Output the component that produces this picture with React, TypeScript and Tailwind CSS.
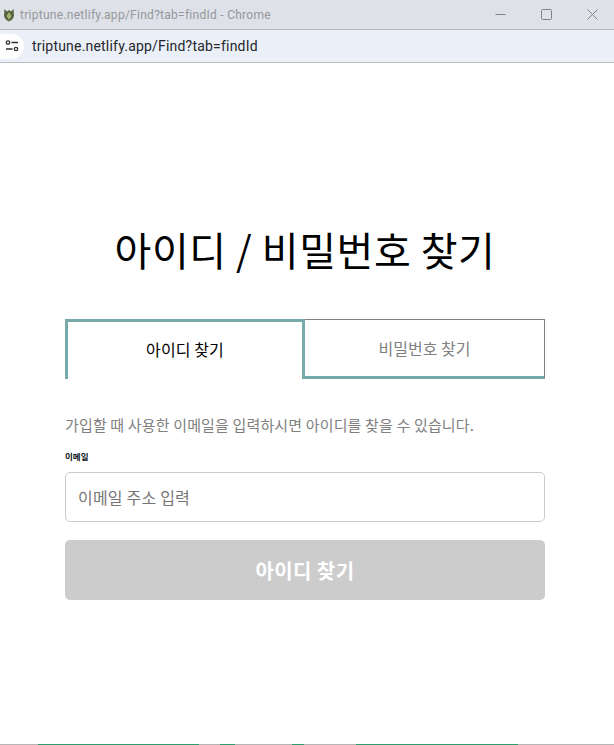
const KR = "font-['Noto_Sans_CJK_KR','Noto_Sans',sans-serif]";

function Leaf() {
  return (
    <svg width="14" height="14" viewBox="0 0 14 14" className="shrink-0">
      <path d="M2.5 1 L5 3.5 L7 2 L9 3.5 L11.5 1 L12 8 C11.5 11 8.5 13 7 13.5 C5.5 13 2.5 11 2 8 Z" fill="#55643f" />
      <path d="M7 4 L9.5 8 L7 12 L4.5 8 Z" fill="#9db56f" />
    </svg>
  );
}

function TitleBar() {
  return (
    <div className="flex h-[30px] shrink-0 items-center justify-between border-b border-[#b4b8bd] bg-[#dee1e7]">
      <div className="flex items-center gap-[4px] pl-[2px]">
        <Leaf />
        <span className="font-['Roboto',sans-serif] text-[12px] tracking-[0.27px] text-[#94979c]">
          triptune.netlify.app/Find?tab=findId - Chrome
        </span>
      </div>
      <div className="flex items-center gap-[35px] pr-[16px]">
        <svg width="11" height="11" viewBox="0 0 11 11" fill="none" stroke="#808387">
          <path d="M0.5 5.5H10.5" />
        </svg>
        <svg width="11" height="11" viewBox="0 0 11 11" fill="none" stroke="#808387">
          <rect x="0.5" y="0.5" width="10" height="10" rx="1" />
        </svg>
        <svg width="11" height="11" viewBox="0 0 11 11" fill="none" stroke="#808387">
          <path d="M0.5 0.5L10.5 10.5M10.5 0.5L0.5 10.5" />
        </svg>
      </div>
    </div>
  );
}

function AddressBar() {
  return (
    <div className="flex h-[33px] shrink-0 items-center gap-[8px] border-b border-[#b9bcc0] bg-[#ebeff8]">
      <div className="flex h-[25px] w-[24px] items-center justify-center rounded-r-full bg-white">
        <svg width="14" height="12" viewBox="0 0 14 12" fill="none" stroke="#2f3235" strokeWidth="1.3">
          <circle cx="3" cy="2.5" r="1.7" />
          <path d="M6.5 2.5H13M1 9H7.5" />
          <circle cx="11" cy="9" r="1.7" />
        </svg>
      </div>
      <span className="font-['Roboto',sans-serif] text-[14px] tracking-[0.2px] text-[#24272b]">
        triptune.netlify.app/Find?tab=findId
      </span>
    </div>
  );
}

export default function App() {
  return (
    <div className={`flex h-[745px] w-[614px] flex-col overflow-hidden bg-white ${KR}`}>
      <TitleBar />
      <AddressBar />
      <main className="flex w-[480px] flex-1 flex-col self-start ml-[65px] pt-[156px]">
        <h1 className="mb-[40px] text-center text-[40px] leading-[60px] font-normal tracking-[0.55px] whitespace-nowrap text-black">
          아이디 / 비밀번호 찾기
        </h1>
        <div className="flex h-[60px]">
          <div className="flex w-[240px] items-center justify-center border-[3px] border-b-0 border-[#76abaa] pb-[3px] text-[16px] tracking-[0.1px] text-black">
            아이디 찾기
          </div>
          <div className="flex w-[240px] items-center justify-center border border-b-[3px] border-l-0 border-[#808080] border-b-[#76abaa] text-[16px] text-[#808080]">
            비밀번호 찾기
          </div>
        </div>
        <p className="mt-[34px] text-[15px] leading-[24px] tracking-[0.15px] whitespace-nowrap text-[#808080]">
          가입할 때 사용한 이메일을 입력하시면 아이디를 찾을 수 있습니다.
        </p>
        <label className="mt-[12px] text-[8.5px] leading-[14px] font-semibold text-[#0a1020]">이메일</label>
        <div className="mt-[9px] flex h-[50px] items-center rounded-[5px] border border-[#cccccc] px-[12px] text-[16px] tracking-[0.2px] text-[#757575]">
          이메일 주소 입력
        </div>
        <button className="mt-[18px] h-[60px] rounded-[5px] bg-[#cccccc] pt-[2px] text-[20px] font-bold tracking-[0.4px] text-white">
          아이디 찾기
        </button>
      </main>
      <div className="flex h-[1px] shrink-0 bg-[#b5b5b5]">
        <div className="ml-[38px] h-full w-[161px] bg-[#2f9c6c]" />
        <div className="ml-[21px] h-full w-[15px] bg-[#2f9c6c]" />
        <div className="ml-[57px] h-full w-[12px] bg-[#2f9c6c]" />
        <div className="ml-[52px] h-full w-[162px] bg-[#2f9c6c]" />
      </div>
    </div>
  );
}
